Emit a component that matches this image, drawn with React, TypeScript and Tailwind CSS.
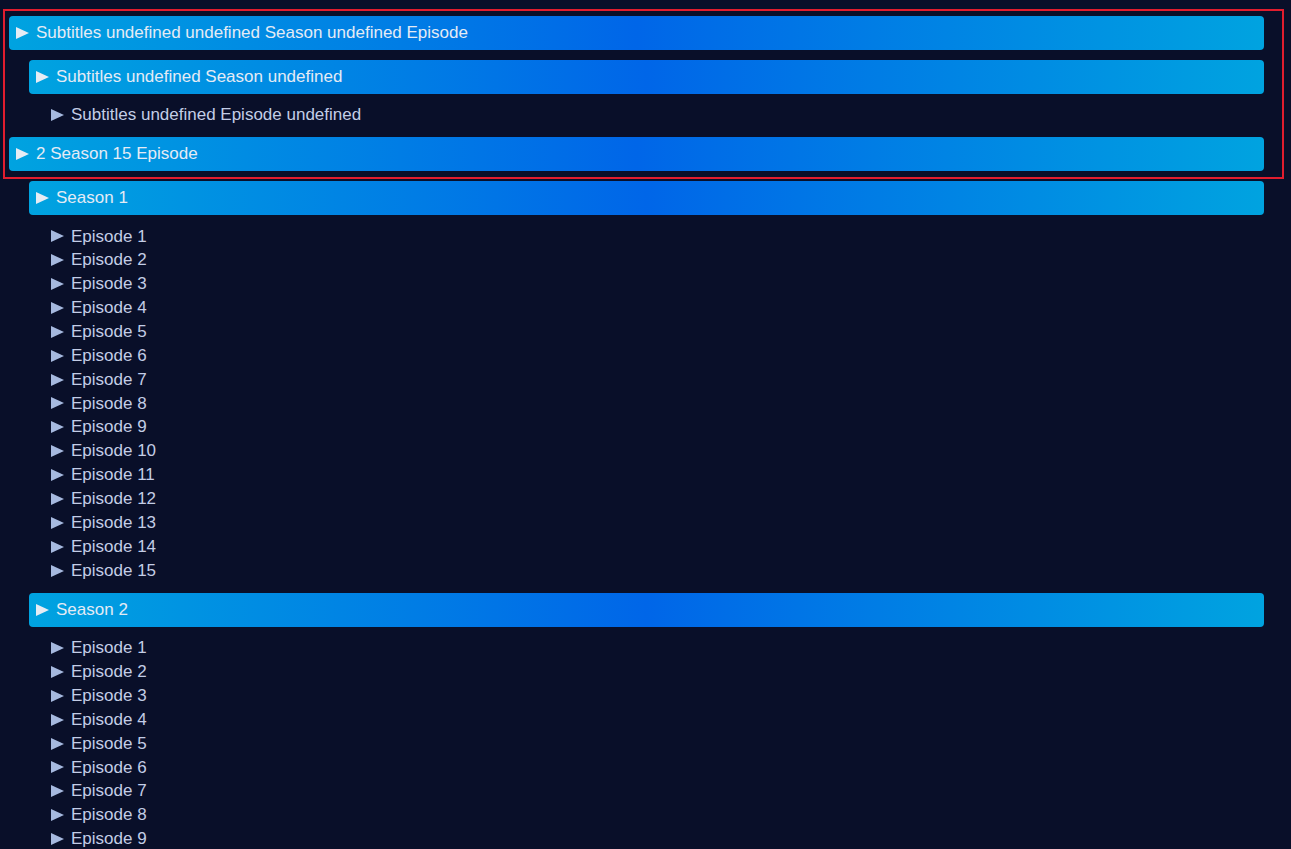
import React from "react";

function Tri({ className }: { className: string }) {
  return (
    <svg width="13" height="12" viewBox="0 0 13 12" className={className} aria-hidden="true">
      <polygon points="0,0 13,6 0,12" fill="currentColor" />
    </svg>
  );
}

function Bar({ label }: { label: string }) {
  return (
    <div className="flex items-center gap-[7px] rounded-[4px] bg-[linear-gradient(90deg,#00a3e0_0%,#0066e8_50%,#00a3e0_100%)] py-[5px] pl-[7px] text-[#e4ebf5]">
      <Tri className="shrink-0 text-[#e6ecf4]" />
      <span>{label}</span>
    </div>
  );
}

function Episode({ label }: { label: string }) {
  return (
    <div className="flex items-center gap-[7px] leading-[23.86px] text-[#c3cde6]">
      <Tri className="shrink-0 text-[#a6b9df]" />
      <span>{label}</span>
    </div>
  );
}

function EpisodeList({ items }: { items: string[] }) {
  return (
    <div className="mb-[10.5px] mt-[9.5px] flex flex-col pl-[22px]">
      {items.map((e) => (
        <Episode key={e} label={e} />
      ))}
    </div>
  );
}

export default function App() {
  const eps = Array.from({ length: 15 }, (_, i) => `Episode ${i + 1}`);
  return (
    <div className="relative min-h-screen bg-[#090f29] pl-[9px] pr-[27px] pt-[16px] font-['Liberation_Sans',Arial,sans-serif] text-[17px] leading-[1.4]">
      <div>
        <Bar label="Subtitles undefined undefined Season undefined Episode" />
        <div className="mt-[10px] pl-[20px]">
          <Bar label="Subtitles undefined Season undefined" />
          <EpisodeList items={["Subtitles undefined Episode undefined"]} />
        </div>
      </div>
      <div>
        <Bar label="2 Season 15 Episode" />
        <div className="mt-[10px] pl-[20px]">
          <Bar label="Season 1" />
          <EpisodeList items={eps} />
          <Bar label="Season 2" />
          <EpisodeList items={eps} />
        </div>
      </div>
      <div className="pointer-events-none absolute left-[3px] top-[9px] h-[170px] w-[1281px] border-2 border-[#e11d2e]" />
    </div>
  );
}
